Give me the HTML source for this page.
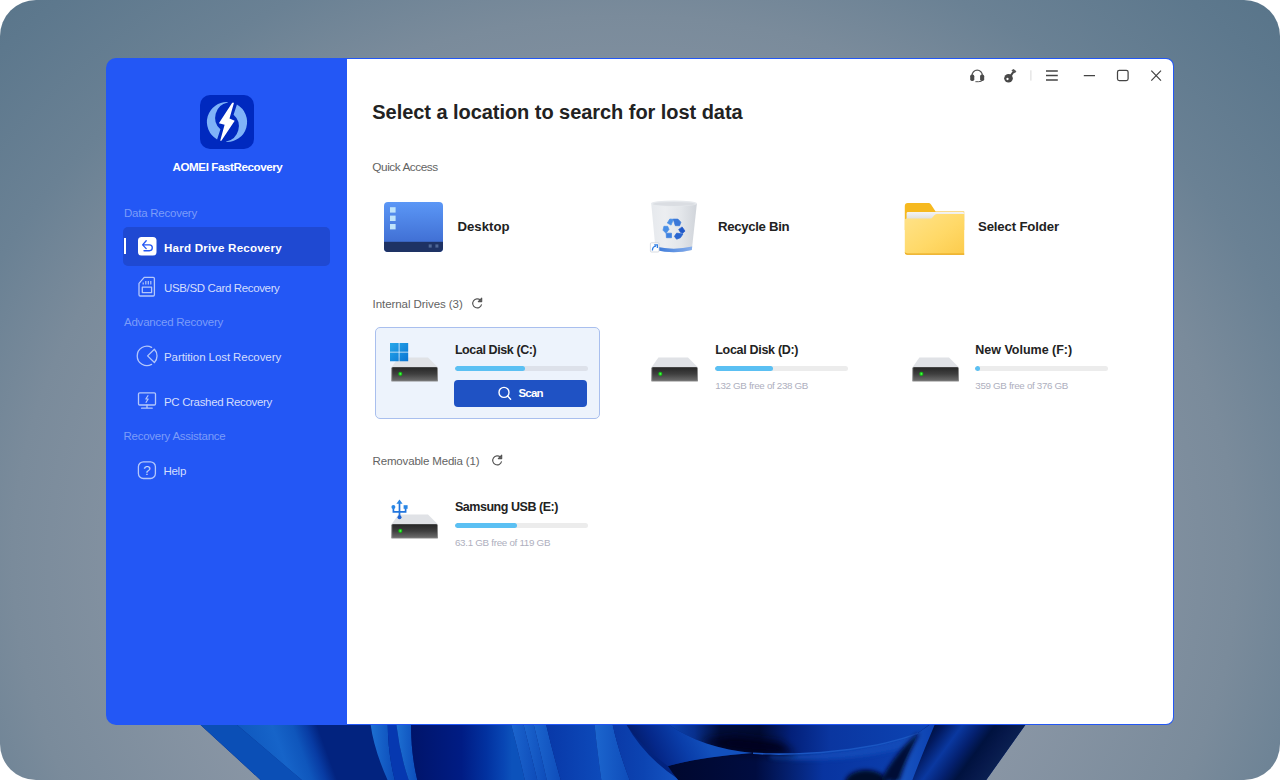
<!DOCTYPE html>
<html lang="en">
<head>
<meta charset="utf-8">
<title>AOMEI FastRecovery</title>
<style>
*{box-sizing:border-box;margin:0;padding:0}
html,body{width:1280px;height:780px;background:#fff;overflow:hidden}
body{font-family:"Liberation Sans",sans-serif;position:relative}
#stage{position:absolute;left:0;top:0;width:1280px;height:780px;border-radius:36px;overflow:hidden;
 background:radial-gradient(ellipse 900px 800px at 625px 560px,#919dac 0%,#8b97a6 45%,#7a8b9b 68%,#6a8194 79%,#5d788d 94%,#59758a 100%)}
#bloom{position:absolute;left:0;top:700px;width:1280px;height:80px}
#win{position:absolute;left:106px;top:58px;width:1068px;height:667px;background:#2357f5;border-radius:10px 8px 8px 10px}
#main{position:absolute;left:241px;top:1px;width:826px;height:665px;background:#fff;border-radius:0 7px 7px 0}
.t{position:absolute;white-space:nowrap;line-height:1}
.b{font-weight:bold}
.sec{font-size:11.5px;color:#636363}
.qa{font-size:13.2px;color:#222}
.dn{font-size:12.5px;color:#222}
.fr{font-size:9.8px;color:#aeafbe}
.bar{position:absolute;width:133px;height:5px;border-radius:2.5px;background:#ececec;overflow:hidden}
.bar i{display:block;height:5px;border-radius:2.5px;background:#5bc0f3}
.lab{font-size:11.5px;color:#7b9cf9}
.itm{font-size:11.5px;color:#d3defd}
svg{position:absolute;overflow:visible}
</style>
</head>
<body>
<div id="stage">
<svg id="bloom" viewBox="0 700 1280 80">
 <defs>
  <clipPath id="bc"><path d="M199.5,724 L1026,724 L985.5,781 L261.5,781 Z"/></clipPath>
  <filter id="bl2" x="-20%" y="-50%" width="140%" height="200%"><feGaussianBlur stdDeviation="2.2"/></filter>
  <filter id="bl4" x="-20%" y="-50%" width="140%" height="200%"><feGaussianBlur stdDeviation="4.5"/></filter>
  <linearGradient id="b1" x1="236" y1="724" x2="320.5" y2="692.9" gradientUnits="userSpaceOnUse"><stop offset="0" stop-color="#0f58be"/><stop offset="0.37" stop-color="#1664c9"/><stop offset="0.58" stop-color="#0f56bc"/><stop offset="0.72" stop-color="#083ca4"/><stop offset="0.84" stop-color="#02237f"/></linearGradient>
  <linearGradient id="b2" x1="0" y1="0" x2="1" y2="0"><stop offset="0" stop-color="#1d70d2"/><stop offset="1" stop-color="#0c4cba"/></linearGradient>
  <linearGradient id="b3" x1="411" y1="0" x2="512" y2="0" gradientUnits="userSpaceOnUse"><stop offset="0" stop-color="#00146a"/><stop offset="0.5" stop-color="#001c84"/><stop offset="0.75" stop-color="#0232a0"/><stop offset="0.92" stop-color="#0846b4"/><stop offset="1" stop-color="#0c52bb"/></linearGradient>
  <linearGradient id="b4" x1="546" y1="0" x2="600" y2="0" gradientUnits="userSpaceOnUse"><stop offset="0" stop-color="#0838a8"/><stop offset="1" stop-color="#0d4aba"/></linearGradient>
  <linearGradient id="b5" x1="0" y1="0" x2="1" y2="0"><stop offset="0" stop-color="#1c66ce"/><stop offset="1" stop-color="#0e4cba"/></linearGradient>
  <linearGradient id="b6" x1="615" y1="0" x2="672" y2="0" gradientUnits="userSpaceOnUse"><stop offset="0" stop-color="#0a3aa8"/><stop offset="0.5" stop-color="#0c44b2"/><stop offset="1" stop-color="#1452c0"/></linearGradient>
  <linearGradient id="b7" x1="636" y1="762" x2="700" y2="730" gradientUnits="userSpaceOnUse"><stop offset="0" stop-color="#02175e"/><stop offset="0.35" stop-color="#05288a"/><stop offset="0.7" stop-color="#0a3eaa"/><stop offset="1" stop-color="#1250bc"/></linearGradient>
  <linearGradient id="b8" x1="668" y1="0" x2="930" y2="0" gradientUnits="userSpaceOnUse"><stop offset="0" stop-color="#0c44b0"/><stop offset="0.1" stop-color="#08308e"/><stop offset="0.2" stop-color="#000c38"/><stop offset="0.35" stop-color="#000a32"/><stop offset="0.47" stop-color="#03207a"/><stop offset="0.62" stop-color="#0a36a0"/><stop offset="1" stop-color="#0c44b4"/></linearGradient>
  <linearGradient id="b9" x1="668" y1="0" x2="918" y2="0" gradientUnits="userSpaceOnUse"><stop offset="0" stop-color="#00082e"/><stop offset="0.35" stop-color="#000c40"/><stop offset="0.62" stop-color="#0834a0"/><stop offset="1" stop-color="#0c40b0"/></linearGradient>
  <linearGradient id="b10" x1="934" y1="724" x2="993.9" y2="767.5" gradientUnits="userSpaceOnUse"><stop offset="0" stop-color="#00103f"/><stop offset="0.12" stop-color="#021a60"/><stop offset="0.32" stop-color="#0a38a0"/><stop offset="0.52" stop-color="#04206e"/><stop offset="0.68" stop-color="#00123f"/><stop offset="0.85" stop-color="#06184a"/><stop offset="1" stop-color="#0a1f50"/></linearGradient>
  <linearGradient id="b11" x1="0" y1="0" x2="1" y2="0"><stop offset="0" stop-color="#1a58c4"/><stop offset="1" stop-color="#0c40b0"/></linearGradient>
 </defs>
 <g clip-path="url(#bc)">
  <rect x="190" y="720" width="850" height="62" fill="#02237f"/>
  <path d="M199,724 L236,724 L303,781 L261,781 Z" fill="#0b4fb6"/>
  <path d="M236,724 L340,724 L360,781 L303,781 Z" fill="url(#b1)"/>
  <path d="M370.5,724 L387.7,724 Q388,755 395,781 L388,781 Q374,750 370.5,724 Z" fill="url(#b2)"/>
  <path d="M387.7,724 L396.3,724 Q400,755 409,781 L395,781 Q388,755 387.7,724 Z" fill="#0638b0"/>
  <path d="M396.3,724 L411,724 Q411,755 417.5,781 L409,781 Q400,755 396.3,724 Z" fill="url(#b2)"/>
  <path d="M411,724 L511,724 Q518,750 525,781 L417.5,781 Q411,755 411,724 Z" fill="url(#b3)"/>
  <path d="M511,724 L523.4,724 Q530,750 537.5,781 L525,781 Q518,750 511,724 Z" fill="url(#b5)"/>
  <path d="M523.4,724 L533.6,724 Q540,750 547,781 L537.5,781 Q530,750 523.4,724 Z" fill="url(#b5)"/>
  <path d="M533.6,724 L546,724 Q552,750 561,781 L547,781 Q540,750 533.6,724 Z" fill="url(#b5)"/>
  <path d="M546,724 L594.5,724 Q597,750 601.5,781 L561,781 Q552,750 546,724 Z" fill="url(#b4)"/>
  <path d="M594.5,724 L612.5,724 Q618,750 630,781 L601.5,781 Q597,750 594.5,724 Z" fill="url(#b5)"/>
  <!-- P1 -->
  <path d="M612.5,724 L626,724 Q645,758 681,781 L630,781 Q618,750 612.5,724 Z" fill="url(#b6)"/>
  <!-- below ridge -->
  <path d="M668,766 Q700,757 753,753 C790,756 870,752 918,733 L890,781 L679,781 Q672,773 668,766 Z" fill="url(#b9)"/>
  <path d="M770,754.5 C800,755.5 870,752 918,733 L912,745 C870,760 810,762 770,758 Z" fill="#164fbc" filter="url(#bl2)" opacity="0.8"/>
  <ellipse cx="866" cy="783" rx="21" ry="13" fill="#00072a" filter="url(#bl2)"/>
  <!-- above ridge -->
  <path d="M668,724 C690,740 720,750 753,753 C790,756 870,752 918,733 L930,724 Z" fill="url(#b8)"/>
  <path d="M700,741 C720,749 740,752 753,753 C770,754.5 785,754.5 795,754 L780,742 L735,736 Z" fill="#00051e" filter="url(#bl4)"/>
  <!-- P2 -->
  <path d="M626,724 L668,724 C690,740 720,750 753,753 Q700,757 668,766 Q642,748 626,724 Z" fill="url(#b7)"/>
  <path d="M753,752.4 C790,755.4 870,751.4 918,732.4 L918,734 C870,753 790,757 753,754 Z" fill="#1a56c2"/>
  <!-- right vertical petals -->
  <path d="M931,724 L1030,724 L986,781 L908,781 Q922,752 934,724 Z" fill="url(#b10)"/>
  <path d="M918,733 L931,724 L935,724 Q923,752 912,781 L895,781 Q905,758 918,733 Z" fill="url(#b11)"/>
  <path d="M918,733 Q896,752 880,781 L899,781 Q906,758 919,734 Z" fill="#000c34" filter="url(#bl2)"/>
 </g>
</svg>
<div id="win">
<div id="main"></div>
</div>
<!-- SIDEBAR -->
<div id="side">
<svg style="left:200px;top:95px" width="54" height="54" viewBox="0 0 54 54">
 <rect width="54" height="54" rx="10" fill="#0029bf"/>
 <g fill="#7fb3f8">
  <path id="cres" d="M28,7 A20 20 0 0 0 17.1,44.4 L20.4,34.3 A15.5 15.5 0 0 1 27.6,7.5 Z"/>
  <path d="M28,7 A20 20 0 0 0 17.1,44.4 L20.4,34.3 A15.5 15.5 0 0 1 27.6,7.5 Z" transform="rotate(180 27 27)"/>
 </g>
 <path d="M32.2,7.8 L34,7.8 L29.5,23.4 L34.7,25.8 L21.4,45.8 L20.2,45.8 L24.6,29.7 L18.9,28.2 Z" fill="#fff"/>
</svg>
<div class="t b" style="left:172.5px;top:161.2px;font-size:11.6px;color:#fff;letter-spacing:-0.41px">AOMEI FastRecovery</div>

<div class="t lab" style="left:124px;top:207.7px;letter-spacing:-0.24px">Data Recovery</div>
<div style="position:absolute;left:123.4px;top:226.5px;width:206.8px;height:39.6px;border-radius:5px;background:#1f49d2"></div>
<div style="position:absolute;left:123.7px;top:238px;width:2.3px;height:16px;background:#fff"></div>
<svg style="left:137.5px;top:237px" width="18.5" height="18.5" viewBox="0 0 18.5 18.5">
 <rect width="18.5" height="18.5" rx="3.6" fill="#fff"/>
 <path d="M8.2,3.8 L4.6,7.9 L8.2,11.6 M4.9,7.9 H11.4 A2.9 2.9 0 0 1 11.4,13.7 H6" fill="none" stroke="#2357f5" stroke-width="1.35" stroke-linecap="round" stroke-linejoin="round"/>
</svg>
<div class="t b" style="left:164px;top:242.2px;font-size:11.6px;color:#fff;letter-spacing:0.2px">Hard Drive Recovery</div>

<svg style="left:138px;top:276px" width="18" height="21" viewBox="138 276 18 21" fill="none" stroke="#b4c7fb" stroke-width="1.3" stroke-linejoin="round">
 <path d="M144.2,277.4 H153.2 A1.2 1.2 0 0 1 154.4,278.6 V294.8 A1.2 1.2 0 0 1 153.2,296 H140.2 A1.2 1.2 0 0 1 139,294.8 V283.4 Z"/>
 <rect x="142.3" y="287.2" width="9.3" height="5.4"/>
 <path d="M143.2,282.4 V284.6 M145.8,281 V284.6 M148.3,281 V284.6 M150.8,281 V284.6" stroke-width="1.2"/>
</svg>
<div class="t itm" style="left:164px;top:282.5px;letter-spacing:-0.36px">USB/SD Card Recovery</div>

<div class="t lab" style="left:124px;top:317px;letter-spacing:-0.23px">Advanced Recovery</div>

<svg style="left:136px;top:345px" width="22" height="22" viewBox="136 345 22 22" fill="none" stroke="#b4c7fb" stroke-width="1.3" stroke-linejoin="round" stroke-linecap="round">
 <path d="M151.6,347.4 A9.7 9.7 0 1 0 151.6,364.4"/>
 <path d="M147.6,355.9 L154.4,349.3 A9.6 9.6 0 0 1 154.4,362.5 Z"/>
</svg>
<div class="t itm" style="left:164px;top:351.6px;letter-spacing:-0.08px">Partition Lost Recovery</div>

<svg style="left:137px;top:391px" width="20" height="19" viewBox="137 391 20 19" fill="none" stroke="#b4c7fb" stroke-width="1.3" stroke-linejoin="round" stroke-linecap="round">
 <rect x="138.5" y="392.8" width="17" height="12.2" rx="1.2"/>
 <path d="M147,405 V408.2 M141.6,408.2 H152.2"/>
 <path d="M148,395.6 L145.8,399 H148.2 L146,402.4" stroke-width="1.1"/>
</svg>
<div class="t itm" style="left:164px;top:396.7px;letter-spacing:-0.34px">PC Crashed Recovery</div>

<div class="t lab" style="left:123.5px;top:430.8px;letter-spacing:-0.25px">Recovery Assistance</div>

<svg style="left:137px;top:461px" width="20" height="19" viewBox="137 461 20 19" fill="none" stroke="#b4c7fb" stroke-width="1.3">
 <rect x="138.4" y="461.8" width="17" height="16.7" rx="5"/>
</svg>
<div class="t itm" style="left:143.2px;top:463.6px;font-size:13.5px;color:#c9d6fc">?</div>
<div class="t itm" style="left:163.4px;top:466.2px;letter-spacing:-0.25px">Help</div>
</div>
<!-- CONTENT -->
<div id="content">
<!-- title bar icons -->
<svg style="left:968px;top:66px" width="200" height="20" viewBox="968 66 200 20" fill="none" stroke="#444" stroke-width="1.2">
 <!-- headset -->
 <path d="M972,76.4 V75.4 A5.2 5.2 0 0 1 982.4,75.4 V76.4" stroke="#555" stroke-width="1.2"/>
 <rect x="970.2" y="74.6" width="4.1" height="6.3" rx="1.7" fill="#4a4a4a" stroke="none"/>
 <rect x="980.1" y="74.6" width="4.1" height="6.3" rx="1.7" fill="#4a4a4a" stroke="none"/>
 <path d="M982.6,80.2 Q981.6,81.7 978.4,81.7 H975.4" stroke="#555" stroke-width="1"/>
 <!-- key -->
 <circle cx="1008.5" cy="78.3" r="4.3" fill="#484848" stroke="none"/>
 <circle cx="1007.5" cy="79" r="1.15" fill="#fff" stroke="none"/>
 <path d="M1010.4,76.2 L1014.4,70.6" stroke="#484848" stroke-width="2"/>
 <path d="M1011.4,70.2 L1013.6,69 L1016.4,71.2 L1014.8,73.2 Z" fill="#555" stroke="none"/>
 <!-- sep -->
 <path d="M1030.9,70.3 V80.6" stroke="#d9d9d9" stroke-width="1"/>
 <!-- menu -->
 <path d="M1046,71 H1057.8 M1046,75.5 H1057.8 M1046,80 H1057.8" stroke-width="1.3"/>
 <!-- min max close -->
 <path d="M1083.8,75.5 H1095" stroke-width="1.25"/>
 <rect x="1117.5" y="70.3" width="10.6" height="10.2" rx="1.8" stroke-width="1.25"/>
 <path d="M1151.3,70.6 L1161,80.6 M1161,70.6 L1151.3,80.6" stroke-width="1.25"/>
</svg>

<div class="t b" style="left:372.3px;top:101.9px;font-size:20px;color:#222;letter-spacing:-0.05px">Select a location to search for lost data</div>
<div class="t sec" style="left:372.3px;top:162.4px;letter-spacing:-0.45px;font-size:11.8px">Quick Access</div>

<!-- Desktop icon -->
<svg style="left:384px;top:202px" width="59" height="50" viewBox="0 0 59 50">
 <defs><linearGradient id="dg" x1="0" y1="0" x2="0" y2="1"><stop offset="0" stop-color="#5b97f6"/><stop offset="1" stop-color="#3a66cc"/></linearGradient>
 <clipPath id="dc"><rect width="59" height="50" rx="4"/></clipPath></defs>
 <g clip-path="url(#dc)"><rect width="59" height="50" fill="url(#dg)"/><rect y="39.8" width="59" height="10.2" fill="#1e3264"/></g>
 <g fill="#bfe4fb"><rect x="6" y="5.2" width="5.6" height="5.4"/><rect x="6" y="13.6" width="5.6" height="5.4"/><rect x="6" y="22" width="5.6" height="5.4"/></g>
 <g fill="#4f6796"><rect x="44.7" y="42.4" width="3" height="3.2"/><rect x="51.4" y="42.4" width="3" height="3.2"/></g>
</svg>
<div class="t b qa" style="left:457.5px;top:220px;letter-spacing:0px">Desktop</div>

<!-- Recycle bin -->
<svg style="left:648px;top:198px" width="52" height="58" viewBox="648 198 52 58">
 <defs><linearGradient id="rbb" x1="0" y1="0" x2="1" y2="0"><stop offset="0" stop-color="#3a78d8"/><stop offset="1" stop-color="#86aeec"/></linearGradient><linearGradient id="rb" x1="0" y1="0" x2="1" y2="0"><stop offset="0" stop-color="#e6e9ed"/><stop offset="0.3" stop-color="#eceef1"/><stop offset="0.65" stop-color="#e3e6ea"/><stop offset="1" stop-color="#d0d4da"/></linearGradient></defs>
 <path d="M651.2,203.4 L655.6,250 Q673.7,254.6 691.8,250 L696.9,203.4 Z" fill="url(#rb)"/>
 <path d="M655.3,246.6 Q673.7,250.8 692.2,246.6 L691.8,250 Q673.7,254.6 655.6,250 Z" fill="url(#rbb)"/>
 <ellipse cx="674" cy="203.4" rx="22.9" ry="3" fill="#e6e9ed"/>
 <ellipse cx="674" cy="203.9" rx="21" ry="2" fill="#dadde2"/>
 <g>
  <path d="M667.3,223 L669.8,219 L673.4,219.3 L671.1,225.1 Z" fill="#4a8fe6" stroke="#4a8fe6" stroke-width="0.7" stroke-linejoin="round"/>
  <path d="M673.2,219.1 L677.9,219.1 L680.9,222.2 L679.6,225.7 L675.3,225.7 Z" fill="#3b78d8" stroke="#3b78d8" stroke-width="0.7" stroke-linejoin="round"/>
  <path d="M678.7,229.4 L682.1,226.9 L685,231.1 L682.5,233.3 L680.4,232.3 Z" fill="#1f58c8" stroke="#1f58c8" stroke-width="0.7" stroke-linejoin="round"/>
  <path d="M674.4,236.4 L676.6,233.1 L683,233.9 L680.4,237.8 L676.6,239.2 Z" fill="#2a66d0" stroke="#2a66d0" stroke-width="0.7" stroke-linejoin="round"/>
  <path d="M666.2,233.2 L671.5,233.2 L671.5,237.7 L666.4,237.7 Z" fill="#3f82e0" stroke="#3f82e0" stroke-width="0.7" stroke-linejoin="round"/>
  <path d="M663,230.2 L663.9,226.3 L667.7,226.3 L669,229.4 L666,233.3 Z" fill="#4a8fe6" stroke="#4a8fe6" stroke-width="0.7" stroke-linejoin="round"/>
 </g>
 <rect x="650.4" y="242.8" width="8.6" height="9.2" rx="1" fill="#fff" stroke="#c6ccd4" stroke-width="0.7"/>
 <path d="M652.4,250.6 Q652.4,246.4 656,246.2 M654.2,244.8 H657.4 V248" fill="none" stroke="#2f7de3" stroke-width="1.3"/>
</svg>
<div class="t b qa" style="left:718px;top:220px;letter-spacing:-0.32px">Recycle Bin</div>

<!-- Folder -->
<svg style="left:904px;top:202px" width="62" height="54" viewBox="904 202 62 54">
 <defs><linearGradient id="ff" x1="0" y1="0" x2="1" y2="1"><stop offset="0" stop-color="#ffe38a"/><stop offset="0.55" stop-color="#ffd968"/><stop offset="1" stop-color="#fccb4c"/></linearGradient>
 <linearGradient id="fp" x1="0" y1="0" x2="0" y2="1"><stop offset="0" stop-color="#f4f4f4"/><stop offset="1" stop-color="#d6d6d6"/></linearGradient></defs>
 <path d="M904.8,206 Q904.8,203 907.8,203 H928.4 Q930,203 931,204.4 L935.6,211.6 H964.2 V230 H904.8 Z" fill="#f6b91f"/>
 <rect x="906.6" y="212" width="57.6" height="10" rx="1.4" fill="url(#fp)"/>
 <path d="M904.8,220.4 Q904.8,218.6 906.6,218.6 H930 Q931.4,218.6 932.4,217.4 L934.6,215 Q935.6,213.9 937,213.9 H964.2 V254.8 H907.2 Q904.8,254.8 904.8,252.4 Z" fill="url(#ff)"/>
 <path d="M904.8,252 Q904.8,254.8 907.2,254.8 H964.2 V253.6 H907.4 Q905.4,253.4 904.8,252 Z" fill="#e9a91f"/>
</svg>
<div class="t b qa" style="left:978px;top:220px;letter-spacing:-0.15px">Select Folder</div>

<div class="t sec" style="left:372.6px;top:299.3px;letter-spacing:-0.07px">Internal Drives (3)</div>
<svg style="left:471px;top:297px" width="13" height="13" viewBox="471 297 13 13" fill="none" stroke="#555" stroke-width="1.1"><path d="M481.6,304.4 A4.5 4.5 0 1 1 480.4,300.2"/><path d="M481.7,298.2 V301.6 H478.3 Z" fill="#666" stroke-linejoin="round"/></svg>

<!-- C card -->
<div style="position:absolute;left:374.5px;top:327px;width:225.5px;height:91.5px;border:1px solid #a9bfee;border-radius:5px;background:#edf3fc"></div>
<svg class="hdd" style="left:390px;top:355.7px" width="50" height="27" viewBox="0 0 50 27">
 <defs><linearGradient id="hf" x1="0" y1="0" x2="0" y2="1"><stop offset="0" stop-color="#262626"/><stop offset="0.5" stop-color="#3f3f3f"/><stop offset="1" stop-color="#6c6c6c"/></linearGradient>
 <radialGradient id="led"><stop offset="0" stop-color="#7dff7d"/><stop offset="0.45" stop-color="#1fdc1f"/><stop offset="1" stop-color="#12a012"/></radialGradient></defs>
 <g id="hddg"><path d="M8.4,1.6 H38 L48,11.6 H1.4 Z" fill="#e0e2e6"/>
 <rect x="1.2" y="11.3" width="46.8" height="14.3" rx="1.2" fill="#8c8c8c"/>
 <rect x="2.2" y="11.3" width="44.8" height="13.4" rx="0.6" fill="url(#hf)"/>
 <circle cx="10.3" cy="17.9" r="2.1" fill="url(#led)"/></g>
</svg>
<svg style="left:389.8px;top:342.7px" width="18.2" height="18.2" viewBox="0 0 18.2 18.2">
 <defs><linearGradient id="wl" x1="0" y1="0" x2="1" y2="1"><stop offset="0" stop-color="#27a8ea"/><stop offset="1" stop-color="#0a74d3"/></linearGradient></defs>
 <path d="M0,0 H8.7 V8.7 H0 Z M9.5,0 H18.2 V8.7 H9.5 Z M0,9.5 H8.7 V18.2 H0 Z M9.5,9.5 H18.2 V18.2 H9.5 Z" fill="url(#wl)"/>
</svg>
<div class="t b dn" style="left:454.9px;top:344.2px;letter-spacing:-0.41px">Local Disk (C:)</div>
<div class="bar" style="left:455px;top:365.8px;background:#dde1ea"><i style="width:69.6px"></i></div>
<div style="position:absolute;left:454px;top:380px;width:133px;height:26.5px;border-radius:4px;background:#1f52c4"></div>
<svg style="left:497px;top:385px" width="16" height="16" viewBox="497 385 16 16" fill="none" stroke="#fff" stroke-width="1.4" stroke-linecap="round"><circle cx="504" cy="392.4" r="5"/><path d="M507.8,396.2 L510.6,399.2"/></svg>
<div class="t b" style="left:518.4px;top:388.3px;font-size:11.5px;color:#fff;letter-spacing:-0.75px">Scan</div>

<!-- D -->
<svg class="hdd" style="left:650.4px;top:355.7px" width="50" height="27" viewBox="0 0 50 27"><use href="#hddg"/></svg>
<div class="t b dn" style="left:715.3px;top:344.2px;letter-spacing:-0.31px">Local Disk (D:)</div>
<div class="bar" style="left:715.3px;top:366px"><i style="width:58px"></i></div>
<div class="t fr" style="left:715.3px;top:381.05px;letter-spacing:-0.33px">132 GB free of 238 GB</div>

<!-- F -->
<svg class="hdd" style="left:910.8px;top:355.7px" width="50" height="27" viewBox="0 0 50 27"><use href="#hddg"/></svg>
<div class="t b dn" style="left:975.3px;top:344.2px;letter-spacing:-0.01px">New Volume (F:)</div>
<div class="bar" style="left:975.3px;top:366px"><i style="width:5px"></i></div>
<div class="t fr" style="left:975.3px;top:381.05px;letter-spacing:-0.33px">359 GB free of 376 GB</div>

<div class="t sec" style="left:372.6px;top:456.1px;letter-spacing:-0.17px">Removable Media (1)</div>
<svg style="left:490.7px;top:453.8px" width="13" height="13" viewBox="471 297 13 13" fill="none" stroke="#555" stroke-width="1.1"><path d="M481.6,304.4 A4.5 4.5 0 1 1 480.4,300.2"/><path d="M481.7,298.2 V301.6 H478.3 Z" fill="#666" stroke-linejoin="round"/></svg>

<!-- E -->
<svg class="hdd" style="left:390px;top:512.8px" width="50" height="27" viewBox="0 0 50 27"><use href="#hddg"/></svg>
<svg style="left:390px;top:498px" width="20" height="22" viewBox="390 498 20 22" fill="none" stroke="#2275dd" stroke-width="1.7">
 <path d="M399.5,503 V516"/><path d="M393.4,507 V511.9 H399.5 M405.6,508 V511.9 H399.5"/>
 <path d="M399.5,499.4 L402.6,503.8 H396.4 Z" fill="#2a86e4" stroke="none"/>
 <circle cx="393.4" cy="506.9" r="2" fill="#2a86e4" stroke="none"/><rect x="403.6" y="505.2" width="4" height="3.6" fill="#2a86e4" stroke="none"/>
 <circle cx="399.5" cy="517.3" r="2" fill="#1f63d3" stroke="none"/>
</svg>
<div class="t b dn" style="left:454.9px;top:501.3px;letter-spacing:-0.46px">Samsung USB (E:)</div>
<div class="bar" style="left:455px;top:522.9px"><i style="width:62px"></i></div>
<div class="t fr" style="left:454.9px;top:537.65px;letter-spacing:-0.29px">63.1 GB free of 119 GB</div>
</div>
</div>
</body>
</html>
